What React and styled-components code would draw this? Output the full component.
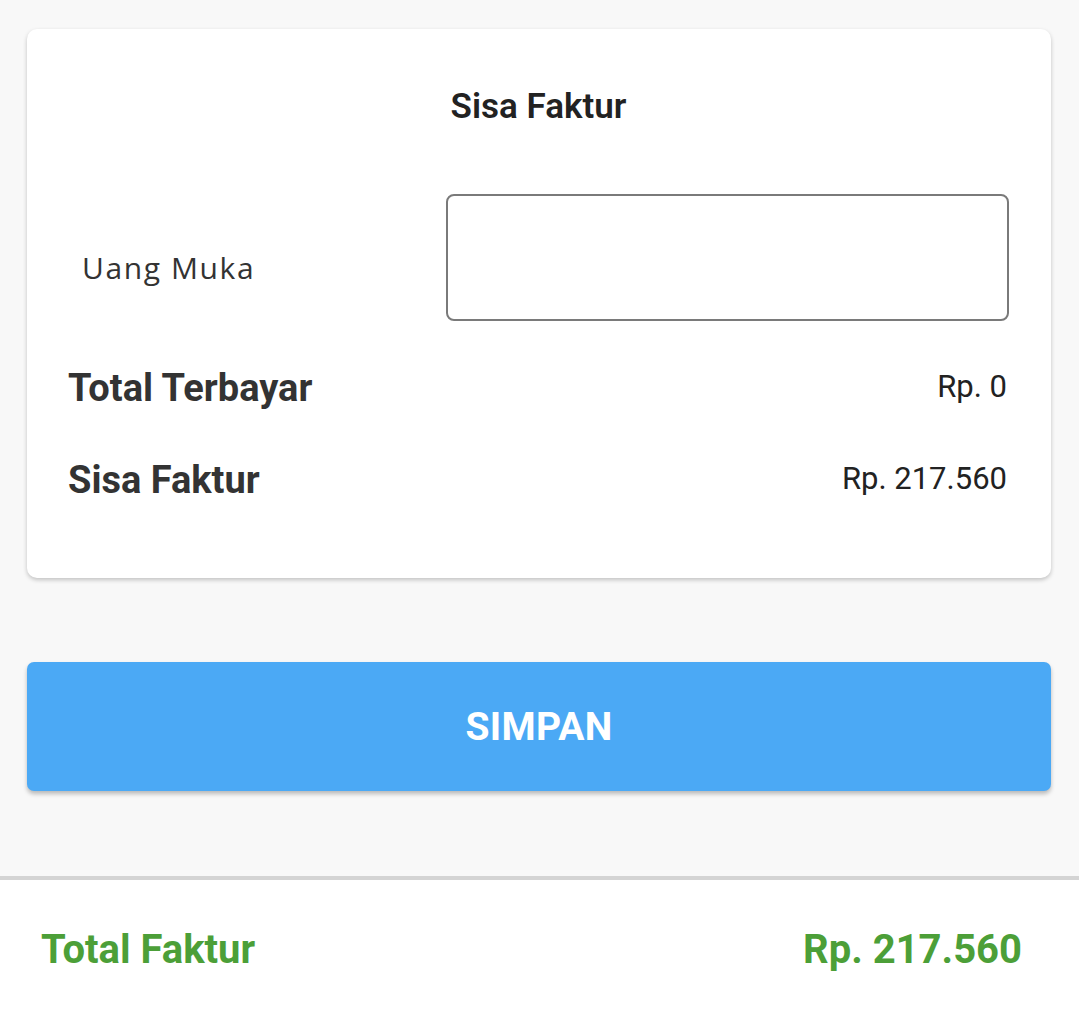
import React from 'react';
import styled, { createGlobalStyle } from 'styled-components';

const GlobalStyle = createGlobalStyle`
  html, body {
    margin: 0;
    padding: 0;
    background: #f8f8f8;
    font-family: Roboto, "Liberation Sans", sans-serif;
  }
`;

const Page = styled.div`
  min-height: 1009px;
  display: flex;
  flex-direction: column;
`;

const Content = styled.div`
  flex: 1;
  padding: 29px 28px 0 27px;
`;

const Card = styled.div`
  background: #fff;
  border-radius: 10px;
  box-shadow: 0 2px 4px rgba(0, 0, 0, 0.22);
  padding: 0 42px 0 41px;
  height: 549px;
  box-sizing: border-box;
  display: flex;
  flex-direction: column;
`;

const Title = styled.div`
  text-align: center;
  font-weight: 600;
  font-size: 35px;
  color: #222;
  height: 40px;
  line-height: 40px;
  margin: 58px 0 0;
`;

const InputRow = styled.div`
  display: flex;
  margin-top: 67px;
`;

const Label = styled.div`
  width: 378px;
  padding-left: 14px;
  padding-top: 54px;
  box-sizing: border-box;
  font-family: "Open Sans", sans-serif;
  font-size: 30px;
  letter-spacing: 1.6px;
  color: #333;
  line-height: 40px;
`;

const Field = styled.input`
  flex: 1;
  height: 127px;
  box-sizing: border-box;
  border: 2.5px solid #7a7a7a;
  border-radius: 8px;
  outline: none;
  font-size: 30px;
  padding: 0 16px;
`;

const SummaryRow = styled.div`
  display: flex;
  justify-content: space-between;
  align-items: center;
  padding-right: 2px;
  margin-top: ${(p) => p.$gap}px;
  height: 50px;
`;

const SummaryLabel = styled.div`
  font-weight: 700;
  font-size: 38px;
  color: #333;
  margin-top: 3px;
`;

const SummaryValue = styled.div`
  font-size: 31px;
  color: #222;
`;

const SaveButton = styled.button`
  display: block;
  width: 100%;
  height: 129px;
  margin-top: 84px;
  border: none;
  border-radius: 7px;
  background: #4ba9f5;
  box-shadow: 0 3px 4px rgba(0, 0, 0, 0.25);
  color: #fff;
  font-family: Roboto, "Liberation Sans", sans-serif;
  font-weight: 700;
  font-size: 39px;
  letter-spacing: 0.3px;
`;

const Footer = styled.div`
  border-top: 4px solid #d4d4d4;
  background: #fff;
  height: 129px;
  display: flex;
  justify-content: space-between;
  align-items: center;
  padding: 0 57px 0 41px;
`;

const FooterText = styled.div`
  color: #4c9f38;
  font-weight: 700;
  font-size: 40px;
  margin-top: 10px;
`;

export default function App() {
  return (
    <Page>
      <GlobalStyle />
      <Content>
        <Card>
          <Title>Sisa Faktur</Title>
          <InputRow>
            <Label>Uang Muka</Label>
            <Field type="text" />
          </InputRow>
          <SummaryRow $gap={40}>
            <SummaryLabel>Total Terbayar</SummaryLabel>
            <SummaryValue>Rp. 0</SummaryValue>
          </SummaryRow>
          <SummaryRow $gap={42}>
            <SummaryLabel>Sisa Faktur</SummaryLabel>
            <SummaryValue>Rp. 217.560</SummaryValue>
          </SummaryRow>
        </Card>
        <SaveButton>SIMPAN</SaveButton>
      </Content>
      <Footer>
        <FooterText>Total Faktur</FooterText>
        <FooterText>Rp. 217.560</FooterText>
      </Footer>
    </Page>
  );
}
